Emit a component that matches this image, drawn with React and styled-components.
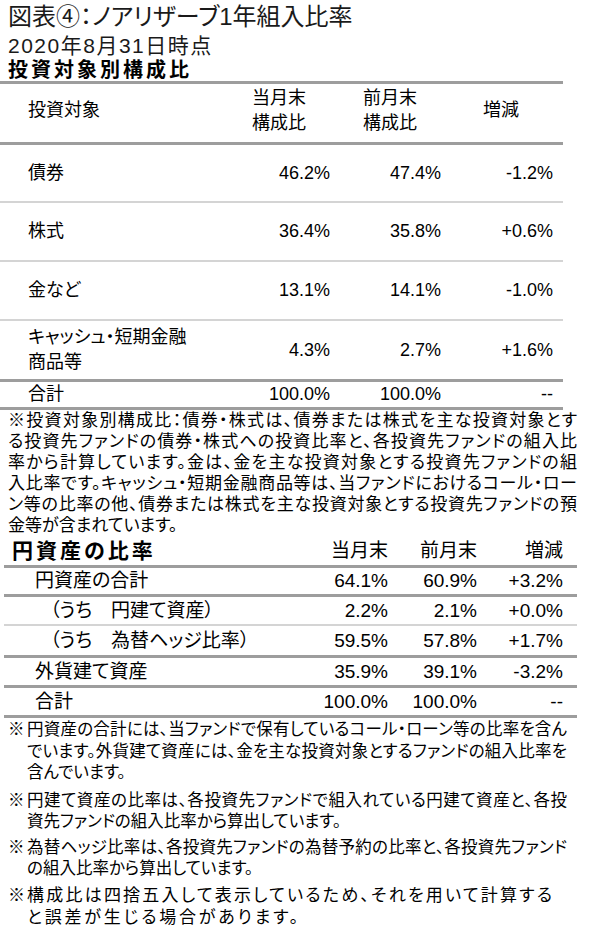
import styled, { createGlobalStyle } from "styled-components";

const GlobalStyle = createGlobalStyle`
  body {
    margin: 0;
    background: #fff;
    color: #000;
    font-family: "Liberation Sans", "Noto Sans CJK JP", sans-serif;
    font-feature-settings: "palt";
  }
`;

const allocation = [
  { label: ["債券"], now: "46.2%", prev: "47.4%", diff: "-1.2%", h: 58, line: "light" },
  { label: ["株式"], now: "36.4%", prev: "35.8%", diff: "+0.6%", h: 59, line: "light" },
  { label: ["金など"], now: "13.1%", prev: "14.1%", diff: "-1.0%", h: 59, line: "light" },
  { label: ["キャッシュ・短期金融", "商品等"], now: "4.3%", prev: "2.7%", diff: "+1.6%", h: 61, line: "heavy" },
];

const yenRatio = [
  { label: "円資産の合計", level: 0, now: "64.1%", prev: "60.9%", diff: "+3.2%", h: 29, line: "heavy" },
  { label: "（うち　円建て資産）", level: 1, now: "2.2%", prev: "2.1%", diff: "+0.0%", h: 29, line: "light" },
  { label: "（うち　為替ヘッジ比率）", level: 1, now: "59.5%", prev: "57.8%", diff: "+1.7%", h: 32, line: "heavy" },
  { label: "外貨建て資産", level: 0, now: "35.9%", prev: "39.1%", diff: "-3.2%", h: 30, line: "heavy" },
  { label: "合計", level: 0, now: "100.0%", prev: "100.0%", diff: "--", h: 30, line: "heavy" },
];

const lines = {
  heavy: "3px solid #9d9d9d",
  light: "2px solid #d4d4d4",
};

const App = () => {
  return (
    <Page>
      <GlobalStyle />
      <Title>図表④：ノアリザーブ1年組入比率</Title>
      <Subtitle>2020年8月31日時点</Subtitle>
      <SectionHeading>投資対象別構成比</SectionHeading>

      <AllocTable>
        <AllocRow $h={61} $line="heavy" $pb={5}>
          <Label>投資対象</Label>
          <HeadCell $indent={22}>当月末<br />構成比</HeadCell>
          <HeadCell $indent={33}>前月末<br />構成比</HeadCell>
          <HeadCell $indent={42}>増減</HeadCell>
        </AllocRow>
        {allocation.map((r) => (
          <AllocRow key={r.label[0]} $h={r.h} $line={r.line}>
            <Label>
              {r.label.map((l, i) => (
                <span key={l}>{i > 0 && <br />}{l}</span>
              ))}
            </Label>
            <Value>{r.now}</Value>
            <Value>{r.prev}</Value>
            <Value>{r.diff}</Value>
          </AllocRow>
        ))}
        <AllocRow $h={28} $line="heavy">
          <Label>合計</Label>
          <Value>100.0%</Value>
          <Value>100.0%</Value>
          <Value>--</Value>
        </AllocRow>
      </AllocTable>

      <NoteText>
        <Line $fill>※投資対象別構成比：債券・株式は、債券または株式を主な投資対象とす</Line>
        <Line $fill>る投資先ファンドの債券・株式への投資比率と、各投資先ファンドの組入比</Line>
        <Line $fill>率から計算しています。金は、金を主な投資対象とする投資先ファンドの組</Line>
        <Line $fill>入比率です。キャッシュ・短期金融商品等は、当ファンドにおけるコール・ロー</Line>
        <Line $fill>ン等の比率の他、債券または株式を主な投資対象とする投資先ファンドの預</Line>
        <Line>金等が含まれています。</Line>
      </NoteText>

      <RatioTable>
        <RatioRow $h={32} $line="heavy">
          <RatioHeading>円資産の比率</RatioHeading>
          <Value>当月末</Value>
          <Value>前月末</Value>
          <Value>増減</Value>
        </RatioRow>
        {yenRatio.map((r) => (
          <RatioRow key={r.label} $h={r.h} $line={r.line}>
            <RatioLabel $level={r.level}>{r.label}</RatioLabel>
            <Value>{r.now}</Value>
            <Value>{r.prev}</Value>
            <Value>{r.diff}</Value>
          </RatioRow>
        ))}
      </RatioTable>

      <Notes>
        <Note $gap={1}>
          <Mark>※</Mark>
          <NoteBody>
            <Line $fill>円資産の合計には、当ファンドで保有しているコール・ローン等の比率を含ん</Line>
            <Line $fill>でいます。外貨建て資産には、金を主な投資対象とするファンドの組入比率を</Line>
            <Line>含んでいます。</Line>
          </NoteBody>
        </Note>
        <Note $gap={6}>
          <Mark>※</Mark>
          <NoteBody>
            <Line $fill>円建て資産の比率は、各投資先ファンドで組入れている円建て資産と、各投</Line>
            <Line>資先ファンドの組入比率から算出しています。</Line>
          </NoteBody>
        </Note>
        <Note $gap={4}>
          <Mark>※</Mark>
          <NoteBody>
            <Line $fill>為替ヘッジ比率は、各投資先ファンドの為替予約の比率と、各投資先ファンド</Line>
            <Line>の組入比率から算出しています。</Line>
          </NoteBody>
        </Note>
        <Note $gap={5} $width={553} $wide>
          <Mark>※</Mark>
          <NoteBody>
            <Line $fill>構成比は四捨五入して表示しているため、それを用いて計算する</Line>
            <Line $track={2.8}>と誤差が生じる場合があります。</Line>
          </NoteBody>
        </Note>
      </Notes>
    </Page>
  );
};

export default App;

const Page = styled.div`
  width: 600px;
  height: 928px;
  overflow: hidden;
`;

const Title = styled.h1`
  margin: 0;
  padding: 3px 0 0 8px;
  font-size: 24px;
  font-weight: normal;
  line-height: 28px;
  color: #1a1a1a;
`;

const Subtitle = styled.div`
  margin-top: 2px;
  padding-left: 8px;
  font-size: 21px;
  line-height: 26px;
  letter-spacing: 1.5px;
  color: #1a1a1a;
`;

const SectionHeading = styled.h2`
  margin: 0;
  padding-left: 8px;
  font-size: 20px;
  font-weight: bold;
  line-height: 22px;
  letter-spacing: 3px;
`;

const AllocTable = styled.div`
  width: 563px;
  border-top: 3px solid #9d9d9d;
`;

const AllocRow = styled.div`
  display: grid;
  grid-template-columns: 230px 100px 111px 112px;
  align-items: center;
  box-sizing: border-box;
  height: ${(p) => p.$h}px;
  padding-bottom: ${(p) => p.$pb || 0}px;
  border-bottom: ${(p) => lines[p.$line]};
  font-size: 18px;
  line-height: 25px;
`;

const Label = styled.div`
  padding-left: 28px;
  white-space: nowrap;
`;

const HeadCell = styled.div`
  padding-left: ${(p) => p.$indent}px;
  white-space: nowrap;
`;

const Value = styled.div`
  text-align: right;
  white-space: nowrap;
`;

const NoteText = styled.div`
  padding-left: 8px;
  width: 569px;
  font-size: 17px;
  line-height: 21px;
`;

const Line = styled.div`
  text-align: ${(p) => (p.$fill ? "justify" : "left")};
  text-align-last: ${(p) => (p.$fill ? "justify" : "auto")};
  ${(p) => (p.$track ? `letter-spacing: ${p.$track}px; white-space: nowrap;` : "")}
`;

const RatioTable = styled.div`
  margin-left: 4px;
  width: 573px;
`;

const RatioRow = styled.div`
  display: grid;
  grid-template-columns: 314px 70px 89px 86px;
  align-items: center;
  box-sizing: border-box;
  height: ${(p) => p.$h}px;
  border-bottom: ${(p) => lines[p.$line]};
  font-size: 19px;
  line-height: 24px;
`;

const RatioHeading = styled.div`
  padding-left: 8px;
  font-size: 21px;
  font-weight: bold;
  letter-spacing: 3px;
`;

const RatioLabel = styled.div`
  padding-left: ${(p) => (p.$level ? 46 : 31)}px;
  white-space: nowrap;
`;

const Notes = styled.div`
  padding-left: 8px;
  width: 559px;
  font-size: 16.5px;
  line-height: 21.5px;
`;

const Note = styled.div`
  display: flex;
  margin-top: ${(p) => p.$gap}px;
  width: ${(p) => (p.$width ? `${p.$width - 8}px` : "auto")};
  font-size: ${(p) => (p.$wide ? "17px" : "inherit")};
  letter-spacing: ${(p) => (p.$wide ? "1px" : "normal")};
  line-height: ${(p) => (p.$wide ? "22px" : "inherit")};
`;

const Mark = styled.span`
  flex: 0 0 19px;
`;

const NoteBody = styled.div`
  flex: 1;
  min-width: 0;
`;
